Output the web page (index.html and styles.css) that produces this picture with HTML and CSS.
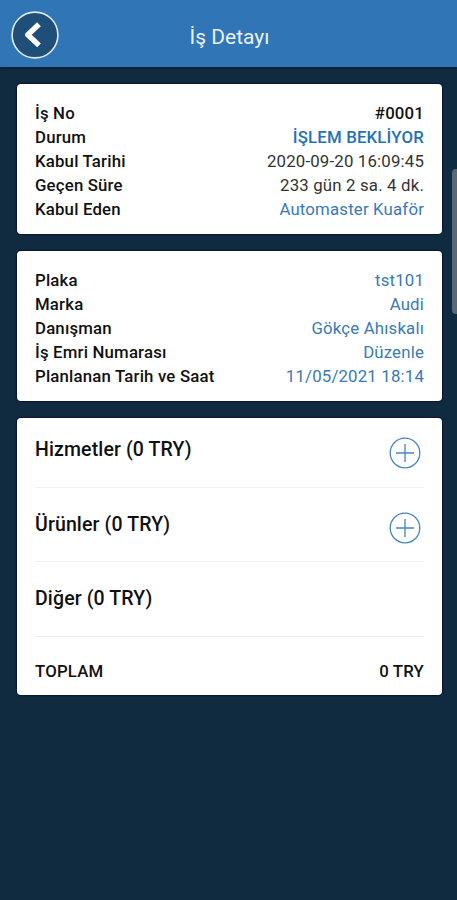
FILE: index.html
```html
<!DOCTYPE html>
<html lang="tr">
<head>
    <meta charset="UTF-8">
    <meta name="viewport" content="width=device-width, initial-scale=1.0">
    <title>İş Detayı</title>
    <link rel="stylesheet" href="styles.css">
</head>
<body>
    <header class="topbar">
        <button type="button" class="back" aria-label="Geri">
            <svg width="48" height="48" viewBox="0 0 48 48">
                <circle cx="24" cy="24" r="22.9" fill="#1f4e79" stroke="#dfeaf6" stroke-width="1.6"/>
                <path d="M28 13.2L16.8 23.8 28 34.4" fill="none" stroke="#fff" stroke-width="5.4" stroke-linejoin="round"/>
            </svg>
        </button>
        <h1 class="title">İş Detayı</h1>
    </header>

    <main class="content">
        <section class="card">
            <div class="row"><b>İş No</b><b>#0001</b></div>
            <div class="row"><b>Durum</b><b class="status">İŞLEM BEKLİYOR</b></div>
            <div class="row"><b>Kabul Tarihi</b><span>2020-09-20 16:09:45</span></div>
            <div class="row"><b>Geçen Süre</b><span>233 gün 2 sa. 4 dk.</span></div>
            <div class="row"><b>Kabul Eden</b><span class="link">Automaster Kuaför</span></div>
        </section>

        <section class="card">
            <div class="row"><b>Plaka</b><span class="link">tst101</span></div>
            <div class="row"><b>Marka</b><span class="link">Audi</span></div>
            <div class="row"><b>Danışman</b><span class="link">Gökçe Ahıskalı</span></div>
            <div class="row"><b>İş Emri Numarası</b><span class="link">Düzenle</span></div>
            <div class="row"><b>Planlanan Tarih ve Saat</b><span class="link">11/05/2021 18:14</span></div>
        </section>

        <section class="card items">
            <div class="item">
                <h2>Hizmetler (0 TRY)</h2>
                <svg class="add" width="32" height="32" viewBox="0 0 32 32">
                    <circle cx="16" cy="16" r="14.8"/>
                    <path d="M16 7v18M7 16h18"/>
                </svg>
            </div>
            <div class="item">
                <h2>Ürünler (0 TRY)</h2>
                <svg class="add" width="32" height="32" viewBox="0 0 32 32">
                    <circle cx="16" cy="16" r="14.8"/>
                    <path d="M16 7v18M7 16h18"/>
                </svg>
            </div>
            <div class="item">
                <h2>Diğer (0 TRY)</h2>
            </div>
            <div class="row total"><b>TOPLAM</b><b>0 TRY</b></div>
        </section>
    </main>

    <div class="scroll-thumb"></div>
</body>
</html>
```
FILE: styles.css
```css
* {
    box-sizing: border-box;
}
body {
    margin: 0;
    min-height: 900px;
    background-color: #102a40;
    color: #111;
    font-family: Roboto, "Liberation Sans", sans-serif;
    font-size: 16.8px;
    letter-spacing: 0.18px;
    overflow: hidden;
}
.topbar {
    display: grid;
    grid-template-columns: 70px 1fr 70px;
    align-items: center;
    height: 67px;
    padding-top: 3px;
    background-color: #3075b6;
    box-shadow: 0 1px 2px #0b1d30;
}
.back {
    width: 48px;
    height: 48px;
    margin: 0 0 0 11px;
    padding: 0;
    border: none;
    background: none;
}
.back svg {
    display: block;
}
.title {
    margin: 4px 0 0 2px;
    color: #e8f1fa;
    font-size: 21px;
    font-weight: 400;
    letter-spacing: 0;
    text-align: center;
}
.content {
    display: flex;
    flex-direction: column;
    gap: 17px;
    padding: 17px 15px 0 17px;
}
.card {
    height: 150px;
    padding: 16.5px 18px 0;
    border-radius: 4px;
    background-color: #fff;
    box-shadow: 0 0 1px 1px #0a1738;
}
.row {
    display: flex;
    justify-content: space-between;
    height: 24.1px;
    line-height: 24.1px;
    white-space: nowrap;
}
.row b {
    font-weight: 500;
}
.row span {
    color: #333;
}
.row .link {
    color: #3a7ab8;
}
.row .status {
    color: #2471b5;
}
.items {
    height: 277px;
    padding-top: 0;
}
.item {
    display: flex;
    justify-content: space-between;
    height: 74.6px;
    padding-top: 21px;
    border-bottom: 1px solid #f0f0f0;
}
.item:first-child {
    height: 69.6px;
    padding-top: 15.5px;
}
.item h2 {
    margin: 0;
    font-size: 19.5px;
    font-weight: 500;
    letter-spacing: 0.13px;
    line-height: 32px;
}
.add {
    margin: 3.5px 3px 0 0;
    fill: none;
    stroke: #4786c0;
    stroke-width: 1.3;
}
.total {
    padding-top: 22px;
}
.scroll-thumb {
    position: absolute;
    top: 169px;
    right: 0;
    width: 5px;
    height: 145px;
    border-radius: 4px 0 0 4px;
    background-color: #596878;
}
```
